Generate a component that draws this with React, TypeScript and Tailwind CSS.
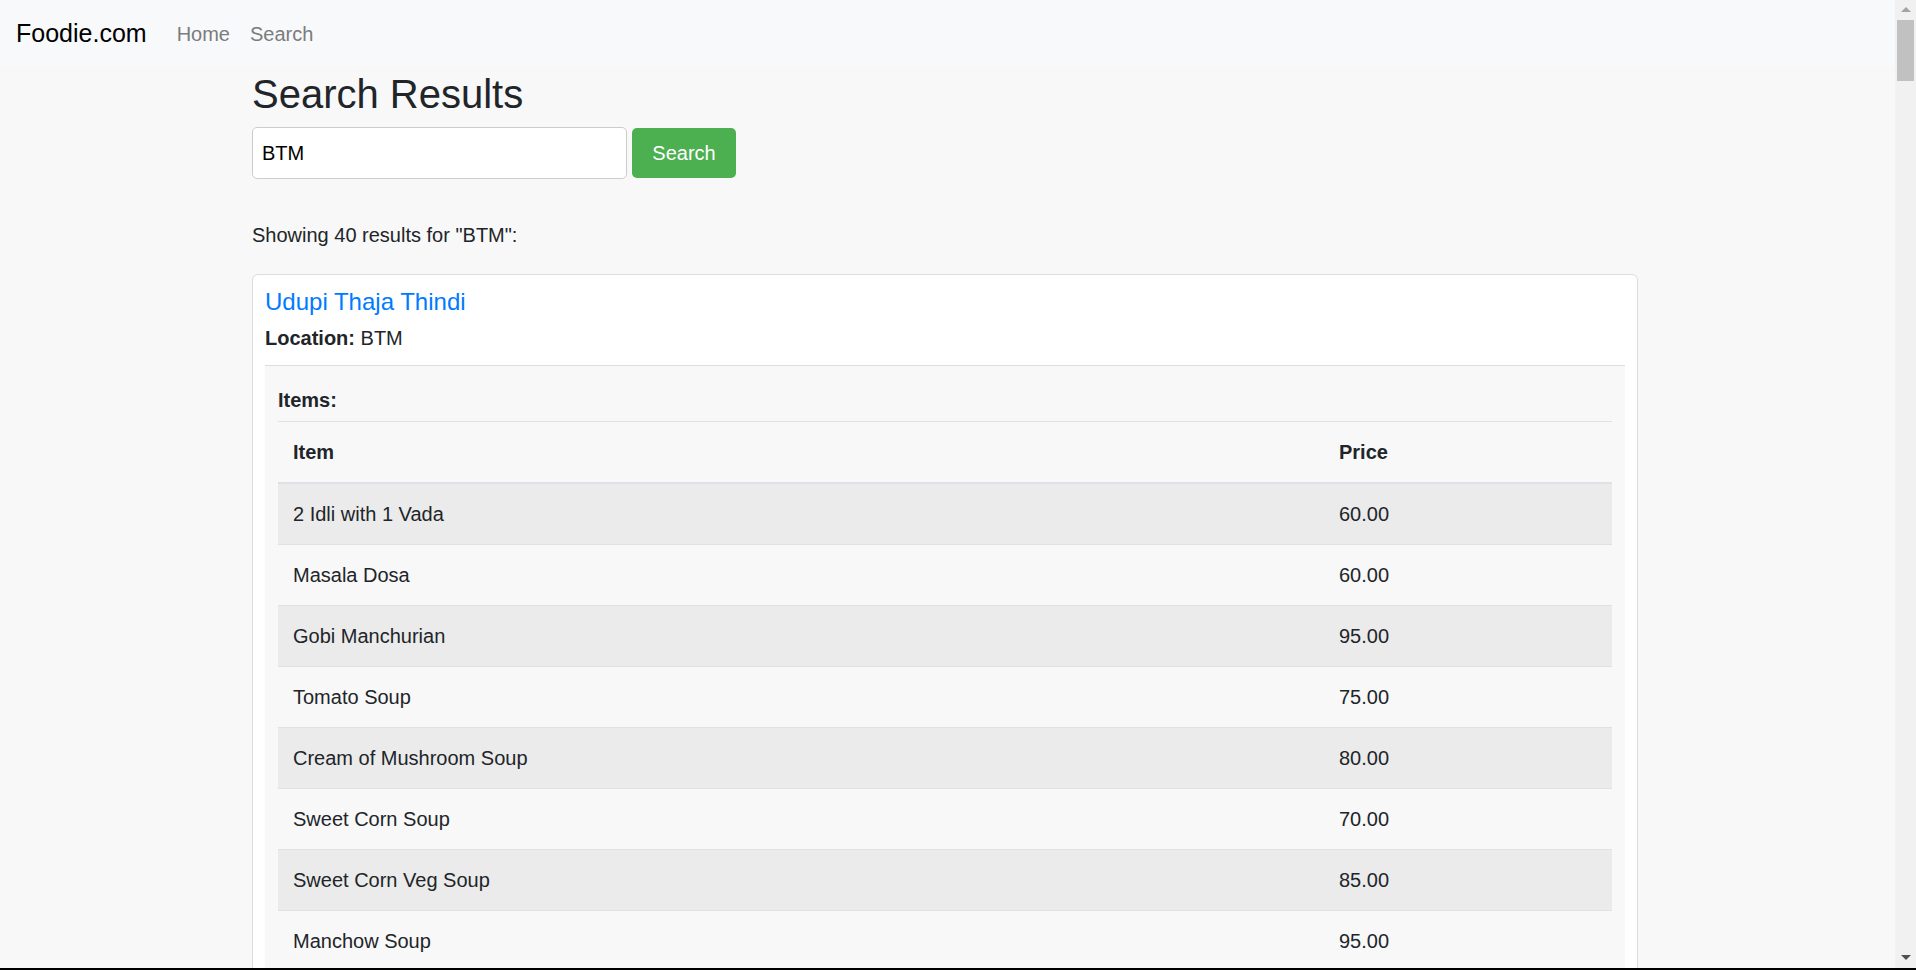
import React from 'react';

const items: { name: string; price: string }[] = [
  { name: '2 Idli with 1 Vada', price: '60.00' },
  { name: 'Masala Dosa', price: '60.00' },
  { name: 'Gobi Manchurian', price: '95.00' },
  { name: 'Tomato Soup', price: '75.00' },
  { name: 'Cream of Mushroom Soup', price: '80.00' },
  { name: 'Sweet Corn Soup', price: '70.00' },
  { name: 'Sweet Corn Veg Soup', price: '85.00' },
  { name: 'Manchow Soup', price: '95.00' },
  { name: 'Hot and Sour Soup', price: '85.00' },
  { name: 'Veg Fried Rice', price: '110.00' },
];

const App: React.FC = () => {
  return (
    <div className="min-h-screen bg-[#f8f8f8] text-[#212529] font-['Liberation_Sans',Arial,sans-serif] text-[20px] leading-[30px]">
      {/* navbar */}
      <nav className="flex items-center bg-[#f8f9fa] px-[16px] py-[8px] pr-[37px]">
        <a className="pt-[7px] pb-[5px] mr-[20px] text-[25px] leading-[37.5px] text-black">Foodie.com</a>
        <a className="px-[10px] pt-[11px] pb-[9px] text-[#7b7c7d]">Home</a>
        <a className="px-[10px] pt-[11px] pb-[9px] text-[#7b7c7d]">Search</a>
      </nav>

      <main className="ml-[252px] w-[1386px] pb-[40px]">
        <h1 className="mt-[4px] mb-[9px] text-[40px] leading-[48px] text-[#212529]">Search Results</h1>

        <form className="flex items-center gap-[5px]" onSubmit={(e) => e.preventDefault()}>
          <input
            defaultValue="BTM"
            className="w-[375px] h-[52px] rounded-[5px] border border-[#cccccc] bg-white px-[9px] text-[20px] text-black outline-none"
          />
          <button className="h-[50px] w-[104px] rounded-[5px] bg-[#4caf50] text-[20px] text-white">Search</button>
        </form>

        <p className="mt-[41px] mb-[24px]">Showing 40 results for "BTM":</p>

        <div className="rounded-[6px] border border-[#dcdcdc] bg-white px-[12px] pt-[13px]">
          <a className="block mb-[6px] text-[24px] leading-[28.8px] text-[#007bff]">Udupi Thaja Thindi</a>
          <p className="mb-[12px]">
            <b>Location:</b> BTM
          </p>

          <div className="border-t border-[#dddddd] bg-[#f8f8f8] px-[13px] pt-[19px]">
            <p className="mb-[6px] font-bold">Items:</p>
            <table className="w-full table-fixed border-collapse">
              <thead>
                <tr className="border-t border-[#dee2e6]">
                  <th className="w-[1046px] h-[62px] px-[15px] text-left font-bold border-b-2 border-[#dee2e6]">Item</th>
                  <th className="h-[62px] px-[15px] text-left font-bold border-b-2 border-[#dee2e6]">Price</th>
                </tr>
              </thead>
              <tbody>
                {items.map((it, i) => (
                  <tr key={it.name} className={i % 2 === 0 ? 'bg-[#ebebeb]' : ''}>
                    <td className="h-[61px] px-[15px] border-t border-[#dee2e6]">{it.name}</td>
                    <td className="h-[61px] px-[15px] border-t border-[#dee2e6]">{it.price}</td>
                  </tr>
                ))}
              </tbody>
            </table>
          </div>
        </div>
      </main>

      {/* window scrollbar as captured */}
      <div className="fixed top-0 right-0 bottom-0 w-[21px] bg-[#f1f1f1] flex flex-col items-center">
        <div className="mt-[7px] h-0 w-0 border-x-[5px] border-b-[5px] border-x-transparent border-b-[#a3a3a3]" />
        <div className="mt-[8px] h-[61px] w-[17px] bg-[#c1c1c1]" />
        <div className="mt-auto mb-[10px] h-0 w-0 border-x-[5px] border-t-[5px] border-x-transparent border-t-[#505050]" />
      </div>
      <div className="fixed left-0 right-0 bottom-0 h-[2px] bg-black" />
    </div>
  );
};

export default App;
